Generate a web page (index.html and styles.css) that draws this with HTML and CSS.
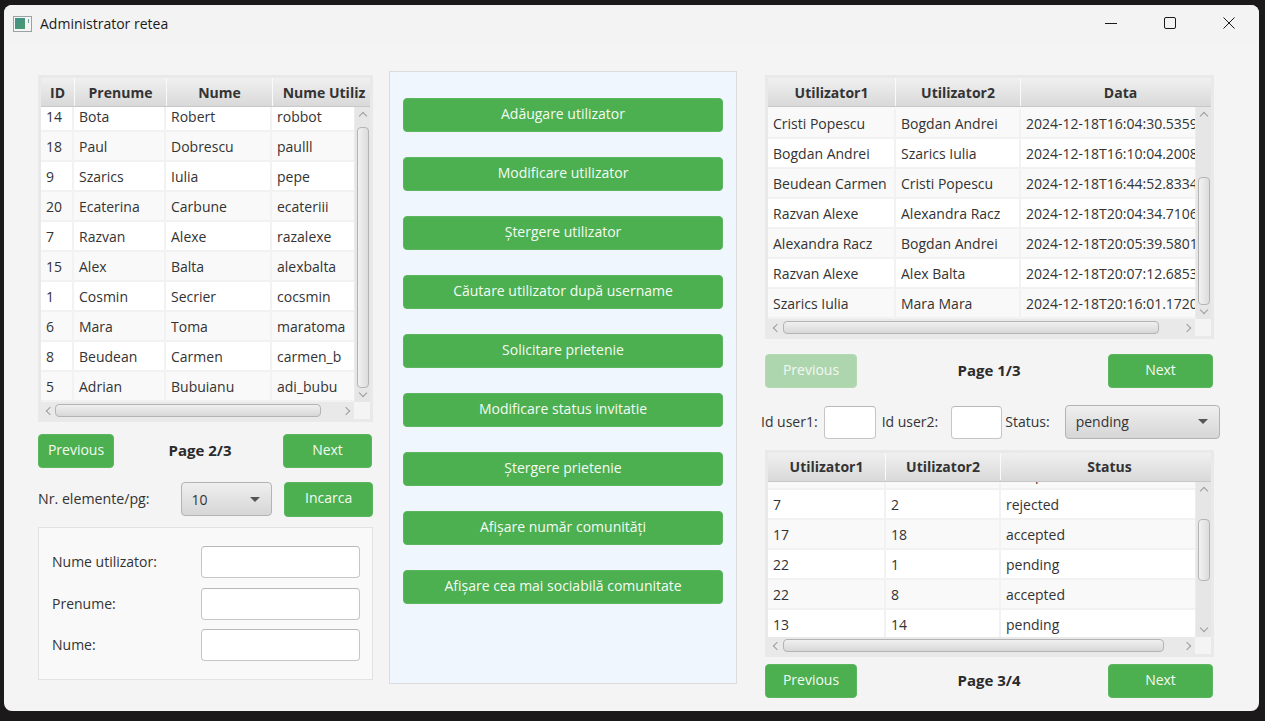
FILE: index.html
```html
<!DOCTYPE html>
<html lang="en">
<head>
  <meta charset="UTF-8" />
  <meta name="viewport" content="width=device-width, initial-scale=1.0" />
  <title>Administrator retea</title>
  <link rel="stylesheet" href="styles.css">
</head>
<body>
  <div class="window">
    <div class="titlebar">
      <svg class="app-icon" width="19" height="16" viewBox="0 0 19 16">
        <defs>
          <linearGradient id="iconFill" x1="0" y1="0" x2="1" y2="1">
            <stop offset="0" stop-color="#3f8f8c"/>
            <stop offset="1" stop-color="#4f9a6b"/>
          </linearGradient>
        </defs>
        <rect x="0.5" y="0.5" width="18" height="15" fill="#f4f6f6" stroke="#9aa2a6"/>
        <rect x="2" y="2" width="10" height="11" fill="url(#iconFill)"/>
        <rect x="15" y="3" width="1" height="4" fill="#6f9c94"/>
      </svg>
      <span class="window-title">Administrator retea</span>
      <div class="window-controls">
        <svg width="12" height="12" viewBox="0 0 12 12"><path d="M0 6.5H12" stroke="#1a1a1a" fill="none"/></svg>
        <svg width="12" height="12" viewBox="0 0 12 12"><rect x="0.5" y="0.5" width="11" height="11" rx="1.5" stroke="#1a1a1a" fill="none"/></svg>
        <svg width="12" height="12" viewBox="0 0 12 12"><path d="M0.5 0.5L11.5 11.5M11.5 0.5L0.5 11.5" stroke="#1a1a1a" fill="none"/></svg>
      </div>
    </div>

    <div class="content">
      <div class="column left-column">
        <div class="table-view users-table">
          <div class="table-head">
            <div>ID</div><div>Prenume</div><div>Nume</div><div>Nume Utiliz</div>
          </div>
          <div class="table-body">
            <div class="row"><div>14</div><div>Bota</div><div>Robert</div><div>robbot</div></div>
            <div class="row"><div>18</div><div>Paul</div><div>Dobrescu</div><div>paulll</div></div>
            <div class="row"><div>9</div><div>Szarics</div><div>Iulia</div><div>pepe</div></div>
            <div class="row"><div>20</div><div>Ecaterina</div><div>Carbune</div><div>ecateriii</div></div>
            <div class="row"><div>7</div><div>Razvan</div><div>Alexe</div><div>razalexe</div></div>
            <div class="row"><div>15</div><div>Alex</div><div>Balta</div><div>alexbalta</div></div>
            <div class="row"><div>1</div><div>Cosmin</div><div>Secrier</div><div>cocsmin</div></div>
            <div class="row"><div>6</div><div>Mara</div><div>Toma</div><div>maratoma</div></div>
            <div class="row"><div>8</div><div>Beudean</div><div>Carmen</div><div>carmen_b</div></div>
            <div class="row"><div>5</div><div>Adrian</div><div>Bubuianu</div><div>adi_bubu</div></div>
          </div>
          <div class="vbar"><i class="arrow up"></i><b class="thumb"></b><i class="arrow down"></i></div>
          <div class="hbar"><i class="arrow back"></i><b class="thumb"></b><i class="arrow forward"></i></div>
          <div class="corner"></div>
        </div>

        <div class="pager users-pager">
          <button class="btn prev">Previous</button>
          <span class="page-label">Page 2/3</span>
          <button class="btn next">Next</button>
        </div>

        <div class="page-size">
          <span class="page-size-label">Nr. elemente/pg:</span>
          <div class="combo size-combo"><span>10</span><i class="caret"></i></div>
          <button class="btn load">Incarca</button>
        </div>

        <div class="user-form">
          <div class="form-row"><label>Nume utilizator:</label><input type="text" class="field"></div>
          <div class="form-row"><label>Prenume:</label><input type="text" class="field"></div>
          <div class="form-row"><label>Nume:</label><input type="text" class="field"></div>
        </div>
      </div>

      <div class="actions">
        <button class="btn action">Adăugare utilizator</button>
        <button class="btn action">Modificare utilizator</button>
        <button class="btn action">Ștergere utilizator</button>
        <button class="btn action">Căutare utilizator după username</button>
        <button class="btn action">Solicitare prietenie</button>
        <button class="btn action">Modificare status invitatie</button>
        <button class="btn action">Ștergere prietenie</button>
        <button class="btn action">Afișare număr comunități</button>
        <button class="btn action">Afișare cea mai sociabilă comunitate</button>
      </div>

      <div class="column right-column">
        <div class="table-view friends-table">
          <div class="table-head">
            <div>Utilizator1</div><div>Utilizator2</div><div>Data</div>
          </div>
          <div class="table-body">
            <div class="row"><div>Cristi Popescu</div><div>Bogdan Andrei</div><div>2024-12-18T16:04:30.535958</div></div>
            <div class="row"><div>Bogdan Andrei</div><div>Szarics Iulia</div><div>2024-12-18T16:10:04.200845</div></div>
            <div class="row"><div>Beudean Carmen</div><div>Cristi Popescu</div><div>2024-12-18T16:44:52.833412</div></div>
            <div class="row"><div>Razvan Alexe</div><div>Alexandra Racz</div><div>2024-12-18T20:04:34.710612</div></div>
            <div class="row"><div>Alexandra Racz</div><div>Bogdan Andrei</div><div>2024-12-18T20:05:39.580123</div></div>
            <div class="row"><div>Razvan Alexe</div><div>Alex Balta</div><div>2024-12-18T20:07:12.685312</div></div>
            <div class="row"><div>Szarics Iulia</div><div>Mara Mara</div><div>2024-12-18T20:16:01.172011</div></div>
          </div>
          <div class="vbar"><i class="arrow up"></i><b class="thumb"></b><i class="arrow down"></i></div>
          <div class="hbar"><i class="arrow back"></i><b class="thumb"></b><i class="arrow forward"></i></div>
          <div class="corner"></div>
        </div>

        <div class="pager friends-pager">
          <button class="btn prev wide disabled">Previous</button>
          <span class="page-label">Page 1/3</span>
          <button class="btn next wide">Next</button>
        </div>

        <div class="filter-row">
          <label>Id user1:</label>
          <input type="text" class="field small first">
          <label>Id user2:</label>
          <input type="text" class="field small second">
          <label>Status:</label>
          <div class="combo status-combo"><span>pending</span><i class="caret"></i></div>
        </div>

        <div class="table-view requests-table">
          <div class="table-head">
            <div>Utilizator1</div><div>Utilizator2</div><div>Status</div>
          </div>
          <div class="table-body">
            <div class="row"><div>3</div><div>9</div><div>accepted</div></div>
            <div class="row"><div>7</div><div>2</div><div>rejected</div></div>
            <div class="row"><div>17</div><div>18</div><div>accepted</div></div>
            <div class="row"><div>22</div><div>1</div><div>pending</div></div>
            <div class="row"><div>22</div><div>8</div><div>accepted</div></div>
            <div class="row"><div>13</div><div>14</div><div>pending</div></div>
          </div>
          <div class="vbar"><i class="arrow up"></i><b class="thumb"></b><i class="arrow down"></i></div>
          <div class="hbar"><i class="arrow back"></i><b class="thumb"></b><i class="arrow forward"></i></div>
          <div class="corner"></div>
        </div>

        <div class="pager requests-pager">
          <button class="btn prev wide">Previous</button>
          <span class="page-label">Page 3/4</span>
          <button class="btn next wide">Next</button>
        </div>
      </div>
    </div>
  </div>
</body>
</html>
```

FILE: styles.css
```css
* {
  box-sizing: border-box;
}
body {
  margin: 0;
  height: 721px;
  padding: 5px 6px 10px 4px;
  background: #1b1919;
  font-family: 'Open Sans', 'Noto Sans', sans-serif;
  font-size: 14px;
  color: #333;
  overflow: hidden;
}
.window {
  height: 706px;
  background: #f4f4f4;
  border-radius: 8px;
  display: flex;
  flex-direction: column;
}
.titlebar {
  height: 40px;
  display: flex;
  align-items: center;
  padding-left: 9px;
  background: #f3f3f3;
  border-radius: 8px 8px 0 0;
  flex-shrink: 0;
}
.app-icon {
  margin-top: -3px;
}
.window-title {
  margin-left: 8px;
  margin-top: -3px;
  color: #1a1a1a;
}
.window-controls {
  margin-left: auto;
  margin-top: -4px;
  margin-right: 24px;
  display: flex;
  gap: 47px;
}
.content {
  display: flex;
  padding: 26px 0 0 34px;
}
.column {
  display: flex;
  flex-direction: column;
  padding-top: 4px;
}
.left-column {
  width: 335px;
}
.right-column {
  width: 449px;
  margin-left: 28px;
}

/* tables */
.table-view {
  display: grid;
  grid-template-columns: 1fr 16px;
  grid-template-rows: 29px 1fr 17px;
  border: 3px solid #e9e9e9;
  background: #f4f4f4;
  overflow: hidden;
}
.users-table {
  --cols: 33px 92px 106px 98px;
  --head-cols: 34px 92px 106px 103px;
  height: 347px;
}
.friends-table {
  --cols: 128px 125px 200px;
  --head-cols: 128px 125px 200px;
  height: 264px;
}
.requests-table {
  --cols: 118px 115px 218px;
  --head-cols: 118px 115px 218px;
  height: 207px;
}
.table-head {
  grid-column: 1 / 3;
  display: grid;
  grid-template-columns: var(--head-cols);
  min-width: 0;
  overflow: hidden;
  background: linear-gradient(#f0f0f0, #d9d9d9);
  border-bottom: 1px solid #c8c8c8;
  font-weight: 700;
  font-size: 14px;
  color: #333;
}
.requests-table .table-head {
  padding-bottom: 1px;
}
.table-head div {
  display: flex;
  align-items: center;
  justify-content: center;
  border-right: 1px solid #fafafa;
  white-space: nowrap;
  overflow: hidden;
}
.table-body {
  overflow: hidden;
  background: #f9f9f9;
}
.users-table .row:first-child {
  margin-top: -5px;
}
.friends-table .row:first-child {
  margin-top: 2px;
}
.requests-table .row:first-child {
  margin-top: -22px;
}
.row {
  display: grid;
  grid-template-columns: var(--cols);
  height: 30px;
  background: #fff;
  border-bottom: 2px solid #f2f2f2;
}
.row:nth-child(even) {
  background: #f9f9f9;
}
.friends-table .row:nth-child(odd) {
  background: #f9f9f9;
}
.friends-table .row:nth-child(even) {
  background: #fff;
}
.requests-table .row:nth-child(odd) {
  background: #f9f9f9;
}
.requests-table .row:nth-child(even) {
  background: #fff;
}
.row div {
  display: flex;
  align-items: center;
  padding-left: 5px;
  border-right: 2px solid #f2f2f2;
  white-space: nowrap;
  overflow: hidden;
}

/* scrollbars */
.vbar {
  display: flex;
  flex-direction: column;
  align-items: center;
  background: #e6e6e6;
  border-left: 1px solid #ececec;
}
.hbar {
  display: flex;
  align-items: center;
  background: #e9e9e9;
}
.corner {
  background: #f4f4f4;
}
.thumb {
  display: block;
  flex-shrink: 0;
  background: linear-gradient(to right, #f2f2f2, #dcdcdc);
  border: 1px solid #b4b4b4;
  border-radius: 4px;
}
.vbar .thumb {
  width: 12px;
}
.hbar .thumb {
  height: 13px;
  background: linear-gradient(#f0f0f0, #d8d8d8);
}
.users-table .vbar .thumb {
  margin-top: 4px;
  height: 261px;
}
.friends-table .vbar .thumb {
  margin-top: 54px;
  height: 128px;
}
.requests-table .vbar .thumb {
  margin-top: 21px;
  height: 62px;
}
.users-table .hbar .thumb {
  margin-left: 2px;
  width: 266px;
}
.friends-table .hbar .thumb {
  margin-left: 3px;
  width: 376px;
}
.requests-table .hbar .thumb {
  margin-left: 3px;
  width: 381px;
}
.arrow {
  flex-shrink: 0;
  width: 6px;
  height: 6px;
  border-top: 1px solid #9c9c9c;
  border-left: 1px solid #9c9c9c;
}
.arrow.up {
  transform: rotate(45deg);
  margin-top: 6px;
  margin-bottom: 4px;
}
.arrow.down {
  transform: rotate(225deg);
  margin-top: auto;
  margin-bottom: 6px;
}
.arrow.back {
  transform: rotate(-45deg);
  margin-left: 6px;
}
.arrow.forward {
  transform: rotate(135deg);
  margin-left: auto;
  margin-right: 5px;
}

/* buttons */
.btn {
  height: 34px;
  padding: 0 0 4px;
  border: 1px solid #5cb660;
  border-radius: 4px;
  background: #4caf50;
  color: #f4fbf4;
  font-family: inherit;
  font-size: 14px;
}
.btn.disabled {
  opacity: 0.42;
}
.pager {
  display: flex;
  align-items: center;
  justify-content: space-between;
  padding-right: 1px;
}
.users-pager {
  margin-top: 12px;
}
.friends-pager {
  margin-top: 15px;
}
.requests-pager {
  margin-top: 7px;
}
.prev {
  width: 76px;
}
.next {
  width: 89px;
}
.prev.wide {
  width: 92px;
}
.next.wide {
  width: 105px;
}
.page-label {
  font-size: 15px;
  font-weight: 700;
  color: #2b2b2b;
  margin-bottom: 2px;
}
.users-pager .page-label {
  margin-left: 3px;
}
.friends-pager .page-label,
.requests-pager .page-label {
  margin-left: 13px;
}
.page-size {
  display: flex;
  align-items: flex-start;
  margin-top: 14px;
}
.page-size-label {
  width: 143px;
  font-size: 14.2px;
  margin-top: 7px;
}
.combo {
  height: 34px;
  display: flex;
  align-items: center;
  justify-content: space-between;
  padding: 0 11px 0 10px;
  background: linear-gradient(#efefef, #d6d6d6);
  border: 1px solid #b3b3b3;
  border-radius: 4px;
}
.caret {
  width: 0;
  height: 0;
  border-left: 5px solid transparent;
  border-right: 5px solid transparent;
  border-top: 5px solid #555;
}
.size-combo {
  width: 92px;
}
.load {
  width: 89px;
  height: 35px;
  margin-left: 12px;
}

/* form */
.user-form {
  margin-top: 10px;
  height: 153px;
  padding: 18px 12px 0 13px;
  background: #f9f9f9;
  border: 1px solid #e2e2e2;
}
.form-row {
  display: flex;
  align-items: center;
  justify-content: space-between;
  margin-bottom: 10px;
}
.form-row:nth-child(2) {
  margin-bottom: 9px;
}
.form-row label {
  margin-bottom: 2px;
}
.field {
  width: 159px;
  height: 32px;
  background: #fff;
  border: 1px solid #c6c6c6;
  border-top-color: #b8b8b8;
  border-radius: 4px;
}

/* middle panel */
.actions {
  width: 348px;
  height: 613px;
  margin-left: 16px;
  padding: 26px 14px 0 13px;
  display: flex;
  flex-direction: column;
  gap: 25px;
  background: #eff6fd;
  border: 1px solid #dcdcdc;
}
.action {
  flex-shrink: 0;
  width: 320px;
}

/* filter row */
.filter-row {
  display: flex;
  align-items: center;
  width: 460px;
  margin: 17px 0 11px -4px;
}
.filter-row label {
  margin-bottom: 2px;
}
.field.small {
  width: 52px;
  height: 33px;
}
.field.first {
  margin: 0 6px;
}
.field.second {
  width: 51px;
  margin: 0 3px 0 13px;
}
.status-combo {
  width: 155px;
  margin-left: 15px;
  padding-bottom: 2px;
}
```
